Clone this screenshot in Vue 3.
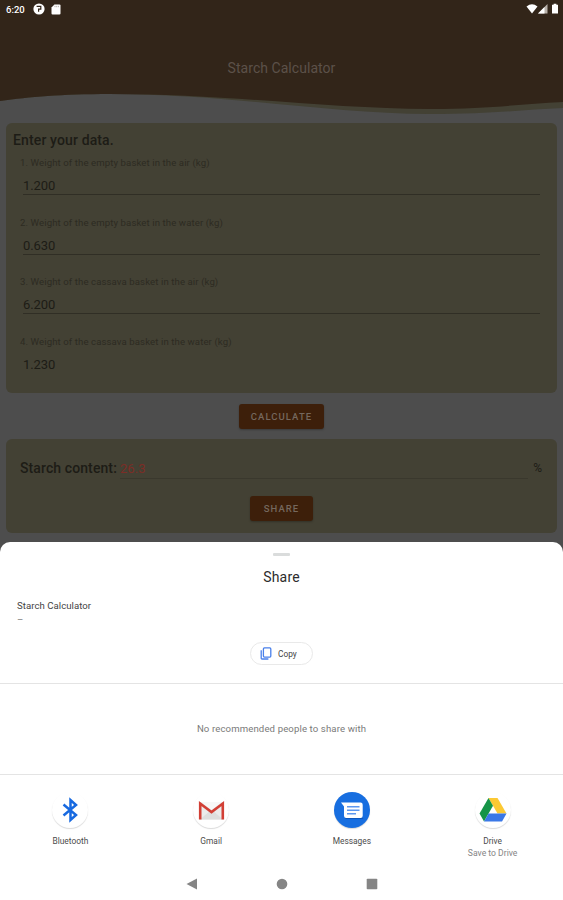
<template>
  <div class="screen">
    <div class="app-page">
      <header class="header">
        <svg class="wave" viewBox="0 0 563 116" preserveAspectRatio="none">
          <path fill="#434134" d="M0 0H563V108C520 110 490 114 430 114C330 114 230 94 110 94C60 94 30 97 0 101Z" />
          <path fill="#322519" d="M0 0H563V102C520 104 490 109 430 109C330 109 230 94 110 94C60 94 30 97 0 101Z" />
        </svg>
        <div class="status-bar">
          <span class="clock">6:20</span>
          <svg class="status-round" viewBox="0 0 12 12">
            <circle cx="6" cy="6" r="5.6" fill="#fff" />
            <path d="M3.6 3.4h4.2v2.8H5.6v2.6" fill="none" stroke="#322519" stroke-width="1.2" />
          </svg>
          <svg class="status-card" viewBox="0 0 10 11">
            <path d="M3.4.5H8.4Q9.5.5 9.5 1.6V9.4Q9.5 10.5 8.4 10.5H1.6Q.5 10.5.5 9.4V3.5Z" fill="#fff" />
            <path d="M4 1.8v1.4M5.7 1.8v1.4M7.4 1.8v1.4" stroke="#9b948d" stroke-width=".7" />
          </svg>
          <svg class="status-signal" viewBox="0 0 34 12">
            <path d="M.5 3.4Q6 -1 11.5 3.4L6 10.4Z" fill="#fff" />
            <path d="M12 10.4L21.5 1V10.4Z" fill="#b9b2ab" />
            <path d="M12 10.4L18.5 4V10.4Z" fill="#fff" />
            <path d="M26 1.8h1.6V.8h2.8v1h1.6V10.6H26Z" fill="#fff" />
          </svg>
        </div>
        <h1 class="app-title">Starch Calculator</h1>
      </header>

      <section class="card form-card">
        <h2 class="card-title">Enter your data.</h2>
        <div v-for="(field, i) in fields" :key="field.label" class="field">
          <label class="field-label">{{ i + 1 }}. {{ field.label }}</label>
          <div class="field-value">{{ field.value }}</div>
        </div>
      </section>

      <button class="btn btn-calculate">CALCULATE</button>

      <section class="card result-card">
        <div class="result-row">
          <span class="result-label">Starch content:</span>
          <span class="result-value">26.3</span>
          <span class="result-unit">%</span>
        </div>
        <button class="btn btn-share">SHARE</button>
      </section>
    </div>

    <div class="sheet">
      <div class="handle"></div>
      <h3 class="sheet-title">Share</h3>
      <div class="preview">
        <div>Starch Calculator</div>
        <div class="preview-text">–</div>
      </div>
      <button class="copy">
        <svg class="copy-icon" viewBox="0 0 12 13">
          <rect x="3.4" y=".9" width="7.4" height="9.2" rx="1" fill="none" stroke="#4a80ea" stroke-width="1.3" />
          <path d="M1.2 3.2V11.2Q1.2 12 2 12H8.4" fill="none" stroke="#4a80ea" stroke-width="1.3" />
        </svg>
        <span>Copy</span>
      </button>
      <div class="people">No recommended people to share with</div>
      <div class="targets">
        <div v-for="target in targets" :key="target.name" class="target">
          <div class="target-icon" :class="target.icon">
            <svg v-if="target.icon === 'bluetooth'" viewBox="0 0 36 36">
              <path d="M11.5 12.5L24 23L18.5 28V8L24 13L11.5 23.5" fill="none" stroke="#1769e0" stroke-width="2.5" />
            </svg>
            <svg v-else-if="target.icon === 'gmail'" viewBox="0 0 36 36">
              <rect x="6" y="10" width="25" height="17.5" rx="1" fill="#ebebeb" />
              <path d="M7 27.5L18.5 17.5L30 27.5" fill="#dedede" />
              <path d="M8 10L18.5 18L29 10Z" fill="#f7f7f7" />
              <path d="M7.2 27.5V11.5L18.5 20L29.8 11.5V27.5" fill="none" stroke="#d23f35" stroke-width="2.6" />
            </svg>
            <svg v-else-if="target.icon === 'messages'" viewBox="0 0 36 36">
              <path d="M10 25.5h18l1.5 1.2H12Z" fill="#0d50b0" />
              <path d="M7 10.5H26.5Q28.7 10.5 28.7 12.7V23.8Q28.7 26 26.5 26H12.2Q10 26 10 23.8V14.5Z" fill="#fff" />
              <path d="M13 14.7H25.5M13 18.2H25.5M13 21.7H22" stroke="#5d98f0" stroke-width="1.5" />
            </svg>
            <svg v-else viewBox="0 0 36 36">
              <path d="M13.5 6H22.5L31.5 21.5H22.5Z" fill="#fcc934" />
              <path d="M13.5 6L18 13.8L9 29.5L4.5 21.5Z" fill="#159447" />
              <path d="M13.5 21.5H31.5L27 29.5H9Z" fill="#3b78e7" />
            </svg>
          </div>
          <div class="target-name">{{ target.name }}</div>
          <div v-if="target.note" class="target-note">{{ target.note }}</div>
        </div>
      </div>
      <nav class="nav-bar">
        <svg viewBox="0 0 12 12"><path d="M.5 6L11 .5V11.5Z" fill="#858585" /></svg>
        <svg viewBox="0 0 12 12"><circle cx="6" cy="6" r="5.3" fill="#858585" /></svg>
        <svg viewBox="0 0 12 12"><rect x=".7" y=".7" width="10.6" height="10.6" rx=".8" fill="#858585" /></svg>
      </nav>
    </div>
  </div>
</template>

<script setup>
const fields = [
  { label: 'Weight of the empty basket in the air (kg)', value: '1.200' },
  { label: 'Weight of the empty basket in the water (kg)', value: '0.630' },
  { label: 'Weight of the cassava basket in the air (kg)', value: '6.200' },
  { label: 'Weight of the cassava basket in the water (kg)', value: '1.230' }
];

const targets = [
  { name: 'Bluetooth', icon: 'bluetooth' },
  { name: 'Gmail', icon: 'gmail' },
  { name: 'Messages', icon: 'messages' },
  { name: 'Drive', icon: 'drive', note: 'Save to Drive' }
];
</script>

<style>
body {
  margin: 0;
  background: #4d4d4d;
}
</style>

<style scoped>
.screen {
  position: relative;
  height: 900px;
  overflow: hidden;
  box-sizing: border-box;
  background: #4d4d4d;
  font-family: Roboto, "Liberation Sans", sans-serif;
}

.app-page {
  display: flex;
  flex-direction: column;
}

h1,
h2,
h3 {
  margin: 0;
}

.header {
  position: relative;
  height: 123px;
}

.wave {
  position: absolute;
  top: 0;
  left: 0;
  width: 100%;
  height: 116px;
}

.status-bar {
  position: relative;
  display: flex;
  align-items: center;
  height: 18px;
  padding: 0 4px 0 6px;
}

.clock {
  width: 20px;
  font-size: 9.5px;
  font-weight: 500;
  color: #fff;
}

.status-round {
  width: 12px;
  height: 12px;
  margin-left: 7px;
}

.status-card {
  width: 10px;
  height: 11px;
  margin-left: 6px;
}

.status-signal {
  width: 34px;
  height: 12px;
  margin-left: auto;
  margin-right: -1px;
}

.app-title {
  position: relative;
  padding-top: 40px;
  line-height: 20px;
  font-size: 14px;
  font-weight: 400;
  letter-spacing: 0.05px;
  text-align: center;
  color: #5c5149;
}

.card {
  margin: 0 6px;
  border-radius: 6px;
  background: #434134;
  box-sizing: border-box;
}

.form-card {
  height: 270px;
  padding: 8px 17px 0;
}

.card-title {
  height: 24px;
  margin-left: -10px;
  line-height: 19px;
  font-size: 14px;
  font-weight: 500;
  letter-spacing: 0.13px;
  color: #1d1c16;
}

.field {
  height: 59.5px;
}

.field-label {
  display: block;
  margin-left: -3px;
  line-height: 16px;
  font-size: 9.6px;
  letter-spacing: 0.1px;
  color: #2d2b22;
}

.field-value {
  height: 23px;
  line-height: 30px;
  font-size: 13px;
  letter-spacing: -0.1px;
  color: #1d1c16;
  border-bottom: 1px solid #302e25;
}

.field:last-child .field-value {
  border-bottom: none;
}

.btn {
  display: block;
  padding: 0;
  border: none;
  border-radius: 3px;
  background: #3d1f0a;
  color: #75685e;
  font-family: inherit;
  font-size: 9.5px;
  font-weight: 500;
  letter-spacing: 1.05px;
  box-shadow: 0 1px 2px rgba(0, 0, 0, 0.25);
}

.btn-calculate {
  align-self: center;
  width: 85px;
  height: 25px;
  margin: 11px 0 10px;
}

.result-card {
  height: 94px;
  padding: 19px 14px 0;
}

.result-row {
  display: flex;
  height: 21px;
  line-height: 21px;
  font-size: 13px;
  color: #1d1c16;
}

.result-label {
  font-size: 14px;
  font-weight: 500;
  letter-spacing: 0.1px;
}

.result-value {
  flex: 1;
  margin: 0 5px 0 3px;
  letter-spacing: 0.1px;
  color: #7c2d26;
  border-bottom: 1px solid #3a382d;
}

.result-unit {
  margin-right: 1px;
  font-size: 12px;
}

.btn-share {
  width: 63px;
  height: 25px;
  margin: 17px auto 0;
}

.sheet {
  position: absolute;
  left: 0;
  right: 0;
  bottom: 0;
  height: 358px;
  display: flex;
  flex-direction: column;
  border-radius: 10px 10px 0 0;
  background: #fff;
}

.handle {
  align-self: center;
  width: 17px;
  height: 3px;
  margin-top: 11px;
  border-radius: 1px;
  background: #dadcdc;
}

.sheet-title {
  margin-top: 11px;
  line-height: 20px;
  font-size: 14px;
  font-weight: 400;
  letter-spacing: 0.2px;
  text-align: center;
  color: #2c2c2c;
}

.preview {
  height: 43px;
  margin-top: 12px;
  padding-left: 17px;
  line-height: 14px;
  font-size: 9.6px;
  letter-spacing: 0.05px;
  color: #444;
}

.preview-text {
  color: #777;
}

.copy {
  align-self: center;
  display: flex;
  align-items: center;
  gap: 6px;
  width: 63px;
  height: 23px;
  padding: 0 0 0 9px;
  box-sizing: border-box;
  border: 1px solid #e9e9e9;
  border-radius: 12px;
  background: #fff;
  font-family: inherit;
  font-size: 8.3px;
  color: #444;
}

.copy-icon {
  width: 12px;
  height: 13px;
}

.people {
  height: 90px;
  margin-top: 18px;
  border-top: 1px solid #e4e4e4;
  border-bottom: 1px solid #e4e4e4;
  line-height: 90px;
  font-size: 9.6px;
  letter-spacing: 0.12px;
  text-align: center;
  color: #7a7a7a;
}

.targets {
  display: grid;
  grid-template-columns: repeat(4, 1fr);
  height: 91px;
  padding-top: 17px;
  box-sizing: border-box;
}

.target {
  text-align: center;
}

.target-icon {
  width: 36px;
  height: 36px;
  margin: 0 auto 7px;
  border-radius: 50%;
  box-shadow: 0 1px 1px rgba(0, 0, 0, 0.15);
}

.target-icon svg {
  display: block;
  width: 36px;
  height: 36px;
}

.messages {
  background: #176ee0;
}

.target-name,
.target-note {
  line-height: 12px;
  font-size: 8.4px;
  color: #4c4c4c;
}

.target-note {
  font-size: 8.6px;
  color: #858585;
}

.nav-bar {
  display: flex;
  justify-content: center;
  gap: 78px;
  padding-top: 12px;
}

.nav-bar svg {
  width: 12px;
  height: 12px;
}
</style>
